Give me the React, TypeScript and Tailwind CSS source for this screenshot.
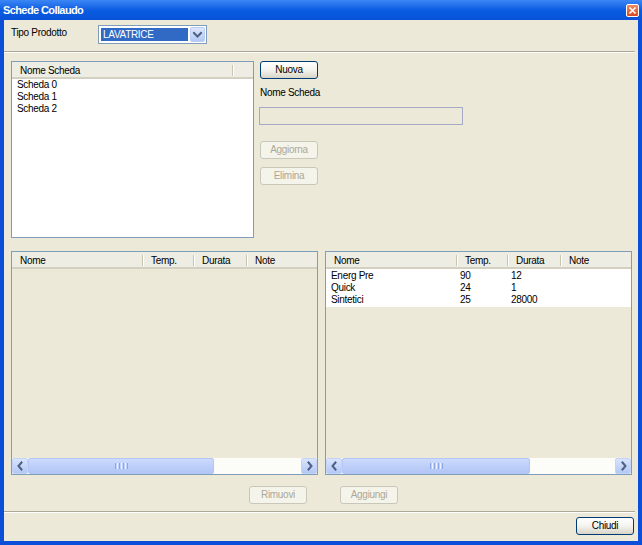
import React from 'react';
import clsx from 'clsx';

// Windows XP "Schede Collaudo" dialog

interface Col {
  label: string;
  w: string; // width class, written out in full
  last?: boolean;
}

const TEST_COLS: Col[] = [
  { label: 'Nome', w: 'w-[131px]' },
  { label: 'Temp.', w: 'w-[51px]' },
  { label: 'Durata', w: 'w-[53px]' },
  { label: 'Note', w: 'w-[68px]', last: true },
];

const ROWS = [
  ['Energ Pre', '90', '12', ''],
  ['Quick', '24', '1', ''],
  ['Sintetici', '25', '28000', ''],
];

function XPButton({ label, disabled }: { label: string; disabled?: boolean }) {
  return (
    <button
      type="button"
      className={clsx(
        'w-[58px] h-[18px] rounded-[3px] border flex items-center justify-center leading-none shrink-0',
        disabled
          ? 'border-[#C9C7BA] bg-[#F5F4EA] text-[#ACA899]'
          : 'border-[#003C74] bg-linear-to-b from-white via-[#F4F3EE] to-[#D8D4C8] text-black'
      )}
    >
      {label}
    </button>
  );
}

function Separator() {
  return <div className="h-[2px] border-t border-[#ACA899] bg-white mr-[3px] shrink-0" />;
}

function HeaderDivider() {
  return <div className="w-[1px] h-[11px] bg-[#C7C5B2] shadow-[1px_0_0_#ffffff] shrink-0" />;
}

function ListHeader({ cols }: { cols: Col[] }) {
  return (
    <div className="h-[17px] shrink-0 flex items-center bg-[#EEEDE3] border-b-[2px] border-[#D3D0C1] pt-[2px]">
      {cols.map((c) => (
        <div key={c.label} className={clsx(c.w, 'flex items-center shrink-0')}>
          <span className="flex-1 pl-[8px] leading-[12px] truncate">{c.label}</span>
          {!c.last && <HeaderDivider />}
        </div>
      ))}
    </div>
  );
}

function Chevron({ dir }: { dir: 'left' | 'right' | 'down' }) {
  const d = dir === 'left' ? 'M6.5 3.5 L3.5 7 L6.5 10.5' : dir === 'right' ? 'M4.5 3.5 L7.5 7 L4.5 10.5' : 'M3 5 L6.5 8.5 L10 5';
  const size = dir === 'down' ? 13 : 11;
  return (
    <svg width={size} height={14} viewBox={`0 0 ${size} 14`} fill="none">
      <path d={d} stroke="#4D6185" strokeWidth="2" strokeLinecap="square" />
    </svg>
  );
}

function ArrowButton({ dir }: { dir: 'left' | 'right' }) {
  return (
    <div className="w-[16px] h-[16px] shrink-0 rounded-[2px] border border-[#C4D3F7] bg-linear-to-b from-[#D9E4FD] to-[#B4C8F5] flex items-center justify-center">
      <Chevron dir={dir} />
    </div>
  );
}

function HScroll({ thumbW }: { thumbW: string }) {
  return (
    <div className="h-[16px] shrink-0 flex bg-[#FCFCF8]">
      <ArrowButton dir="left" />
      <div
        className={clsx(
          thumbW,
          'h-[16px] shrink-0 rounded-[2px] border border-[#B3C6F4] bg-linear-to-b from-[#CCDAFC] via-[#BECFF9] to-[#B2C5F4] flex items-center justify-center gap-[1px]'
        )}
      >
        <div className="w-[1px] h-[6px] bg-[#8CA6E8]" />
        <div className="w-[1px] h-[6px] bg-[#EEF3FF]" />
        <div className="w-[1px] h-[6px] bg-[#8CA6E8]" />
        <div className="w-[1px] h-[6px] bg-[#EEF3FF]" />
        <div className="w-[1px] h-[6px] bg-[#8CA6E8]" />
        <div className="w-[1px] h-[6px] bg-[#EEF3FF]" />
        <div className="w-[1px] h-[6px] bg-[#8CA6E8]" />
      </div>
      <div className="flex-1" />
      <ArrowButton dir="right" />
    </div>
  );
}

function TestList({ rows, thumbW }: { rows: string[][]; thumbW: string }) {
  return (
    <div className="w-[307px] h-[224px] shrink-0 border border-[#7F9DB9] bg-[#ECE9D8] flex flex-col">
      <ListHeader cols={TEST_COLS} />
      <div className="flex-1 min-h-0">
        {rows.length > 0 && (
          <div className="bg-white pt-[1px] pb-[1px]">
            {rows.map((r) => (
              <div key={r[0]} className="h-[12px] flex leading-[12px]">
                {r.map((cell, i) => (
                  <span
                    key={i}
                    className={clsx(TEST_COLS[i].w, i === 0 ? 'pl-[5px]' : 'pl-[3px]', 'shrink-0 truncate')}
                  >
                    {cell}
                  </span>
                ))}
              </div>
            ))}
          </div>
        )}
      </div>
      <HScroll thumbW={thumbW} />
    </div>
  );
}

export default function App() {
  return (
    <div className="w-[642px] h-[545px] flex flex-col bg-[#0B4FD9] font-['Liberation_Sans',Arial,sans-serif] text-[10px] tracking-[-0.3px] text-black overflow-hidden">
      {/* Title bar */}
      <div className="h-[20px] shrink-0 flex items-center justify-between pl-[3px] pr-[3px] bg-linear-to-b from-[#3B87F5] via-[#0A5CE2] to-[#0852D6]">
        <span className="text-white text-[11px] font-bold tracking-[-0.6px] leading-none">Schede Collaudo</span>
        <div className="w-[13px] h-[13px] rounded-[2px] border border-white bg-linear-to-b from-[#F08A60] to-[#D9461E] flex items-center justify-center">
          <svg width="9" height="9" viewBox="0 0 9 9">
            <path d="M1.5 1.5 L7.5 7.5 M7.5 1.5 L1.5 7.5" stroke="#ffffff" strokeWidth="1.6" />
          </svg>
        </div>
      </div>

      {/* Client area */}
      <div className="flex-1 mx-[4px] mb-[4px] bg-[#ECE9D8] flex flex-col">
        {/* Tipo prodotto */}
        <div className="h-[25px] shrink-0 flex items-start pt-[5px] pl-[7px]">
          <span className="w-[87px] mt-[2px] leading-[12px] shrink-0">Tipo Prodotto</span>
          <div className="w-[109px] h-[19px] border border-[#7F9DB9] bg-white flex p-[1px] gap-[1px]">
            <div className="flex-1 m-[1px] bg-[#316AC5] text-white leading-[13px] pl-[2px]">LAVATRICE</div>
            <div className="w-[15px] rounded-[2px] border border-[#BCCDF4] bg-linear-to-b from-[#DCE6FD] to-[#B4C8F5] flex items-center justify-center">
              <Chevron dir="down" />
            </div>
          </div>
        </div>

        <div className="mt-[6px]">
          <Separator />
        </div>

        {/* Schede */}
        <div className="mt-[8px] flex pl-[7px] gap-[6px] shrink-0">
          <div className="w-[243px] h-[177px] shrink-0 border border-[#7F9DB9] bg-white flex flex-col">
            <ListHeader cols={[{ label: 'Nome Scheda', w: 'w-[221px]' }]} />
            <div className="flex-1">
              {['Scheda 0', 'Scheda 1', 'Scheda 2'].map((s) => (
                <div key={s} className="h-[12px] leading-[12px] pl-[5px]">
                  {s}
                </div>
              ))}
            </div>
          </div>

          <div className="flex flex-col">
            <XPButton label="Nuova" />
            <span className="mt-[8px] leading-[12px]">Nome Scheda</span>
            <div className="mt-[8px] -ml-[1px] w-[204px] h-[18px] border border-[#A7AAC6] bg-[#ECE9D8]" />
            <div className="mt-[16px]">
              <XPButton label="Aggiorna" disabled />
            </div>
            <div className="mt-[8px]">
              <XPButton label="Elimina" disabled />
            </div>
          </div>
        </div>

        {/* Prove */}
        <div className="mt-[13px] flex pl-[7px] gap-[7px] shrink-0">
          <TestList rows={[]} thumbW="w-[186px]" />
          <TestList rows={ROWS} thumbW="w-[188px]" />
        </div>

        <div className="mt-[11px] flex pl-[245px] gap-[33px] shrink-0">
          <XPButton label="Rimuovi" disabled />
          <XPButton label="Aggiungi" disabled />
        </div>

        <div className="mt-[7px]">
          <Separator />
        </div>

        <div className="mt-[4px] flex justify-end pr-[4px]">
          <XPButton label="Chiudi" />
        </div>
      </div>
    </div>
  );
}
